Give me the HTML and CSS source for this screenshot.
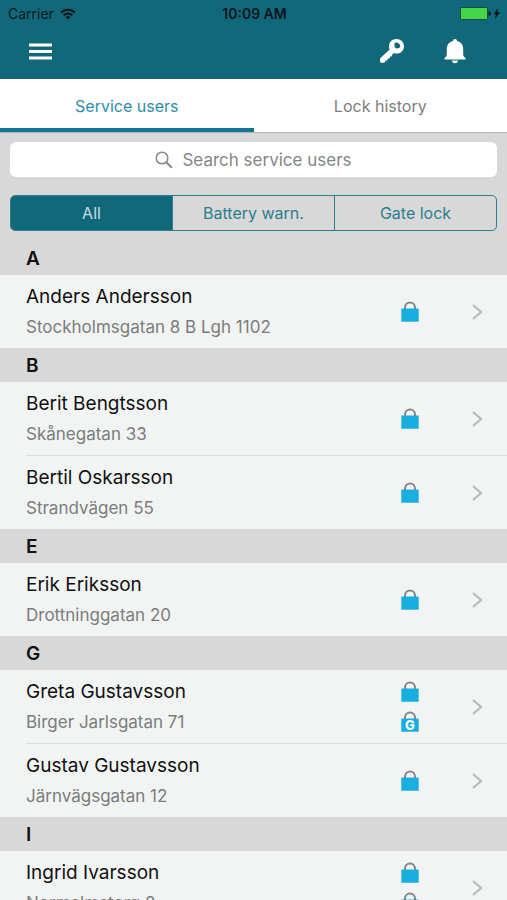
FILE: index.html
```html
<!DOCTYPE html>
<html lang="en">
<head>
    <meta charset="UTF-8">
    <meta name="viewport" content="width=device-width, initial-scale=1.0">
    <title>Service users</title>
    <link rel="stylesheet" href="styles.css">
</head>
<body>

    <!-- Shared icons -->
    <svg class="sprite" aria-hidden="true">
        <symbol id="lock" viewBox="0 0 18 21">
            <path d="M4 8V6.5a5 5 0 0 1 10 0V8" fill="none" stroke="#858585" stroke-width="2"/>
            <rect x="0.3" y="7.5" width="17.4" height="13.2" rx="0.5" fill="#18aee0"/>
        </symbol>
        <symbol id="chevron" viewBox="0 0 12 18">
            <path d="M2 2l8 7-8 7" fill="none" stroke="#b9babb" stroke-width="2.2"/>
        </symbol>
    </svg>

    <div class="app">
        <header class="top">
            <div class="status-bar">
                <span class="carrier">
                    Carrier
                    <svg width="16" height="12" viewBox="0 0 16 12" fill="none" stroke="#06161b" stroke-width="2">
                        <path d="M1 4.6a10 10 0 0 1 14 0M3.6 7.2a6.3 6.3 0 0 1 8.8 0"/>
                        <path d="M8 11.5L5.6 9a3.4 3.4 0 0 1 4.8 0z" fill="#06161b" stroke="none"/>
                    </svg>
                </span>
                <span class="clock">10:09 AM</span>
                <span class="battery">
                    <svg width="41" height="13" viewBox="0 0 41 13">
                        <rect x="0.5" y="0.5" width="27" height="12" rx="1" fill="#45d64c" stroke="#0a4b3c"/>
                        <path d="M28.5 4.5h1a1.5 2 0 0 1 0 4h-1z" fill="#06161b"/>
                        <path d="M38.2 1l-4.700 6.300h2.500L34.800 12l5.300-6.700h-2.800z" fill="#06161b"/>
                    </svg>
                </span>
            </div>
            <div class="nav-bar">
                <button class="icon-button" type="button" aria-label="Menu">
                    <svg width="23" height="17" viewBox="0 0 23 17" fill="#fff">
                        <path d="M0 0.500h23v3H0zM0 7h23v3H0zM0 13.500h23v3H0z"/>
                    </svg>
                </button>
                <button class="icon-button push" type="button" aria-label="Keys">
                    <svg width="26" height="26" viewBox="0 0 26 26">
                        <path fill="#fff" fill-rule="evenodd" d="M17.500 1a7.500 7 0 0 1 7.500 7.200a7.300 7.300 0 0 1-10.200 6.800l-1.600 1.500-.2 1.700-1.900.2-.3 1.800-2 .2-.3 1.800-1.900.3-.5 1.800L3.500 25 1.200 24.600 1 20.500l9.600-9.100A7.300 7.300 0 0 1 17.500 1zM18.300 4.700c-2.100-.6-3.100.5-2.900 2.100.2 2 .6 3.600 2.100 3.600 2.100.1 3.700-.8 3.800-2.200.1-1.600-1.400-3.100-3-3.500z"/>
                    </svg>
                </button>
                <button class="icon-button" type="button" aria-label="Notifications">
                    <svg width="22" height="26" viewBox="0 0 22 26" fill="#fff">
                        <path d="M11 1c1.200 0 2 .8 2 1.900 4 .9 6.200 4 6.200 8.100v5.500c0 1.600.9 2.600 2.300 3.400V21.500H.5V19.900C1.900 19.100 2.800 18.100 2.800 16.500V11c0-4.100 2.200-7.200 6.200-8.100C9 1.800 9.800 1 11 1z"/>
                        <path d="M8 22.500h6c0 1.700-1.300 2.700-3 2.700s-3-1-3-2.700z"/>
                    </svg>
                </button>
            </div>
        </header>

        <nav class="tabs">
            <a class="tab active" href="#users">Service users</a>
            <a class="tab" href="#history">Lock history</a>
        </nav>

        <div class="filters">
            <label class="search">
                <svg width="18" height="18" viewBox="0 0 18 18" fill="none" stroke="#8a8a8d">
                    <circle cx="7" cy="7" r="5.800" stroke-width="1.500"/>
                    <path d="M11.300 11.300l5.500 5.500" stroke-width="2"/>
                </svg>
                <input type="search" placeholder="Search service users" aria-label="Search service users">
            </label>
            <div class="segments">
                <button class="segment selected" type="button">All</button>
                <button class="segment" type="button">Battery warn.</button>
                <button class="segment" type="button">Gate lock</button>
            </div>
        </div>

        <main class="list" id="users">
            <h2 class="letter">A</h2>
            <ul class="group">
                <li><a class="user" href="#anders">
                    <span class="info"><span class="name">Anders Andersson</span><span class="address">Stockholmsgatan 8 B Lgh 1102</span></span>
                    <span class="locks"><svg class="lock"><use href="#lock"/></svg></span>
                    <svg class="chevron"><use href="#chevron"/></svg>
                </a></li>
            </ul>

            <h2 class="letter">B</h2>
            <ul class="group">
                <li><a class="user" href="#berit">
                    <span class="info"><span class="name">Berit Bengtsson</span><span class="address">Skånegatan 33</span></span>
                    <span class="locks"><svg class="lock"><use href="#lock"/></svg></span>
                    <svg class="chevron"><use href="#chevron"/></svg>
                </a></li>
                <li><a class="user" href="#bertil">
                    <span class="info"><span class="name">Bertil Oskarsson</span><span class="address">Strandvägen 55</span></span>
                    <span class="locks"><svg class="lock"><use href="#lock"/></svg></span>
                    <svg class="chevron"><use href="#chevron"/></svg>
                </a></li>
            </ul>

            <h2 class="letter">E</h2>
            <ul class="group">
                <li><a class="user" href="#erik">
                    <span class="info"><span class="name">Erik Eriksson</span><span class="address">Drottninggatan 20</span></span>
                    <span class="locks"><svg class="lock"><use href="#lock"/></svg></span>
                    <svg class="chevron"><use href="#chevron"/></svg>
                </a></li>
            </ul>

            <h2 class="letter">G</h2>
            <ul class="group">
                <li><a class="user" href="#greta">
                    <span class="info"><span class="name">Greta Gustavsson</span><span class="address">Birger Jarlsgatan 71</span></span>
                    <span class="locks">
                        <svg class="lock"><use href="#lock"/></svg>
                        <span class="gate"><svg class="lock"><use href="#lock"/></svg><span class="gate-label">G</span></span>
                    </span>
                    <svg class="chevron"><use href="#chevron"/></svg>
                </a></li>
                <li><a class="user" href="#gustav">
                    <span class="info"><span class="name">Gustav Gustavsson</span><span class="address">Järnvägsgatan 12</span></span>
                    <span class="locks"><svg class="lock"><use href="#lock"/></svg></span>
                    <svg class="chevron"><use href="#chevron"/></svg>
                </a></li>
            </ul>

            <h2 class="letter">I</h2>
            <ul class="group">
                <li><a class="user" href="#ingrid">
                    <span class="info"><span class="name">Ingrid Ivarsson</span><span class="address">Normalmstorg 8</span></span>
                    <span class="locks">
                        <svg class="lock"><use href="#lock"/></svg>
                        <span class="gate"><svg class="lock"><use href="#lock"/></svg><span class="gate-label">G</span></span>
                    </span>
                    <svg class="chevron"><use href="#chevron"/></svg>
                </a></li>
            </ul>
        </main>
    </div>

</body>
</html>
```

FILE: styles.css
```css
* {
    box-sizing: border-box;
}

body {
    margin: 0;
    font-family: Inter, "Liberation Sans", sans-serif;
    background-color: #d8d8d8;
    color: #111;
}

a {
    color: inherit;
    text-decoration: none;
}

button, input {
    font: inherit;
}

.sprite {
    display: none;
}

.app {
    display: flex;
    flex-direction: column;
    height: 100vh;
    overflow: hidden;
}

/* Header */
.top {
    background-color: #12687b;
    padding-bottom: 8px;
}

.status-bar {
    display: grid;
    grid-template-columns: 1fr auto 1fr;
    align-items: center;
    height: 27px;
    padding: 0 6px 0 8px;
    font-size: 14px;
    color: #06161b;
}

.carrier {
    display: flex;
    align-items: center;
    gap: 6px;
}

.clock {
    font-weight: 600;
}

.battery {
    display: flex;
    justify-content: flex-end;
}

.nav-bar {
    display: flex;
    align-items: center;
    height: 44px;
    padding: 4px 30px 0 18px;
    gap: 19px;
}

.icon-button {
    display: flex;
    align-items: center;
    justify-content: center;
    width: 44px;
    height: 40px;
    padding: 0;
    border: 0;
    background: none;
}

.push {
    margin-left: auto;
}

/* Tabs */
.tabs {
    display: flex;
    background-color: #fff;
    border-bottom: 1px solid #b4b4b4;
}

.tab {
    flex: 1;
    height: 53px;
    padding-top: 4px;
    border-bottom: 4px solid transparent;
    font-size: 16px;
    line-height: 46px;
    text-align: center;
    color: #7d7d7d;
}

.tab.active {
    color: #2b8daa;
    border-color: #137594;
}

/* Search and filter */
.filters {
    padding: 9px 10px 10px;
}

.search {
    display: flex;
    align-items: center;
    justify-content: center;
    gap: 9px;
    height: 35px;
    margin-bottom: 18px;
    border-radius: 6px;
    background-color: #fff;
}

.search input {
    field-sizing: content;
    padding: 0;
    border: 0;
    outline: 0;
    background: none;
    font-size: 17px;
}

.search input::placeholder {
    color: #858588;
}

.segments {
    display: flex;
    height: 36px;
    border: 1px solid #2d7d8e;
    border-radius: 5px;
    overflow: hidden;
}

.segment {
    flex: 1;
    padding: 0;
    border: 0;
    background: none;
    font-size: 16px;
    color: #2d7d8e;
}

.segment + .segment {
    border-left: 1px solid #2d7d8e;
}

.segment.selected {
    background-color: #12687b;
    color: #c5dde2;
}

/* User list */
.list {
    flex: 1;
    overflow-y: auto;
    scrollbar-width: none;
}

.letter {
    height: 34px;
    margin: 0;
    padding: 2px 0 0 26px;
    background-color: #d8d8d8;
    font-size: 19px;
    font-weight: 600;
    line-height: 32px;
}

.group {
    margin: 0;
    padding: 0;
    list-style: none;
    background-color: #f2f4f4;
}

.group li + li {
    margin-left: 26px;
    border-top: 1px solid #dcdede;
}

.group li + li .user {
    padding-left: 0;
}

.user {
    display: flex;
    align-items: center;
    height: 73px;
    padding: 0 24px 0 26px;
}

.info {
    flex: 1;
    display: flex;
    flex-direction: column;
}

.name {
    font-size: 19px;
    line-height: 30px;
}

.address {
    font-size: 17px;
    line-height: 30px;
    color: #7b7c7c;
}

.locks {
    display: flex;
    flex-direction: column;
    gap: 9px;
    margin-right: 52px;
}

.lock {
    display: block;
    width: 18px;
    height: 21px;
}

.gate {
    position: relative;
}

.gate-label {
    position: absolute;
    left: 0;
    right: 0;
    bottom: 0;
    font-size: 13px;
    font-weight: 800;
    line-height: 14px;
    text-align: center;
    color: #fff;
}

.chevron {
    width: 12px;
    height: 18px;
}
```
